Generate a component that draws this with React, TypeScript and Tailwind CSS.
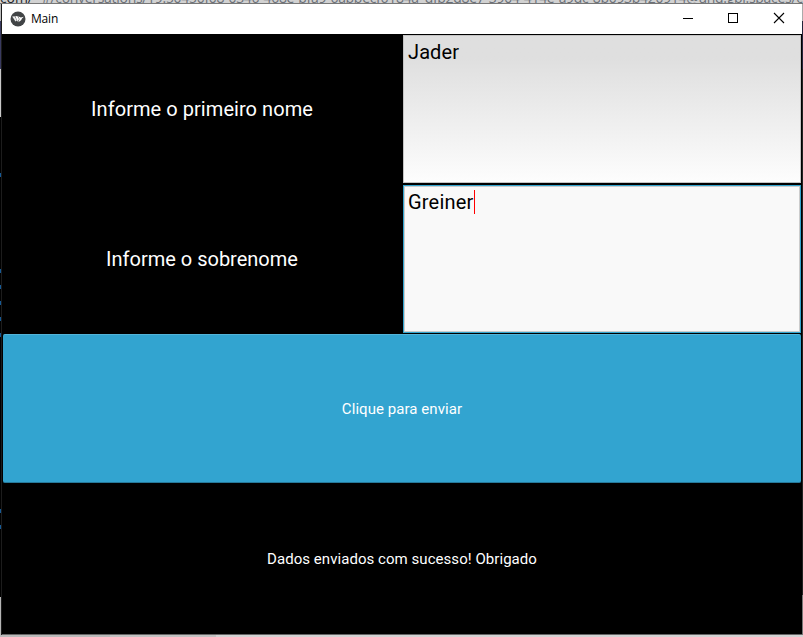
import React from "react";

function KivyLogo() {
  return (
    <svg width="16" height="16" viewBox="0 0 16 16" className="shrink-0">
      <circle cx="8" cy="8" r="7.5" fill="#414446" />
      <path d="M2.2 5.6 L4.6 5.3 L6.9 9.4 L5.5 10.6 Z" fill="#eee" />
      <path d="M5.2 5.2 L7.3 5.1 L9.1 8 L7.7 10.8 Z" fill="#fff" />
      <path d="M8.1 5.2 L10.8 6.4 L13.8 5.8 L12 7.5 L11.1 9.2 L8.3 11.2 L9.5 8 Z" fill="#fff" />
    </svg>
  );
}

function TitleBar() {
  return (
    <header className="flex h-[30px] shrink-0 items-center bg-white pl-2">
      <KivyLogo />
      <span className="ml-[5px] font-['Open_Sans',sans-serif] text-[12px] leading-[30px] tracking-[-0.2px] text-black">Main</span>
      <div className="ml-auto flex items-center">
        <svg width="119" height="30" fill="none" stroke="#000" shapeRendering="crispEdges">
          <path d="M0 14.5H10" />
          <rect x="45.5" y="9.5" width="9" height="9" />
          <path d="M91 9L101 19M101 9L91 19" shapeRendering="auto" strokeWidth="1.1" />
        </svg>
      </div>
    </header>
  );
}

function LeftEdge() {
  return (
    <div className="flex w-0.5 shrink-0 flex-col border-r border-[#1c1c1c] bg-black">
      <div className="h-[17px] bg-[#bdbdbd]" />
      <div className="h-12 bg-[#393a60]" />
      <div className="h-12 bg-[#c9c9c9]" />
      <div className="h-[56px]" />
      {[96, 16, 16, 16, 16, 176, 16, 16].map((gap, i) => (
        <div key={i} className="shrink-0" style={{ height: gap }}>
          <div className="h-1 w-full bg-[#155a96]" />
        </div>
      ))}
      <div className="mt-auto h-[38px] bg-[#b5b5b5]" />
    </div>
  );
}

export default function App() {
  return (
    <div className="flex h-[637px] w-[803px] flex-col overflow-hidden bg-[#c0c0c0] font-[Roboto,sans-serif]">
      <div className="h-1 shrink-0 overflow-hidden border-b border-[#777] bg-[#d2d2d2]">
        <div className="-mt-[12px] w-[900px] whitespace-nowrap font-['Open_Sans',sans-serif] text-[14px] leading-5 tracking-[-0.3px] text-[#6b7078]">
          <span className="mr-[3px] tracking-[-0.1px] text-[#24272b]">com/</span>_#/conversations/19:50450f08-0346-468e-bfa9-6abbecf6184a_dfb2d8e7-3904-414e-a9dc-8b093b420914@unq.gbl.spaces/ctx
        </div>
      </div>
      <div className="flex h-[631px] shrink-0">
        <LeftEdge />
        <main className="flex w-[800px] flex-col border-b border-[#666] bg-black">
          <TitleBar />
          <div className="flex h-[150px] shrink-0">
            <div className="flex w-[400px] items-center justify-center text-[20px] tracking-[0.06px] text-white">Informe o primeiro nome</div>
            <div className="ml-px mt-px h-[148px] w-[398px] border border-[#c4c4c4] bg-linear-to-b from-[#dfdfdf] from-15% to-[#fdfdfd] px-1 pt-px text-[20px] leading-[30px] tracking-[0.1px] text-black">Jader</div>
          </div>
          <div className="flex h-[150px] shrink-0">
            <div className="flex w-[400px] items-center justify-center text-[20px] text-white">Informe o sobrenome</div>
            <div className="ml-px mt-px h-[148px] w-[398px] border border-[#32a4ce] bg-[#f9f9f9]">
              <div className="flex h-full items-start border border-[#ccc] pl-[3px] pt-[3px] text-[20px] leading-6 tracking-[0.2px] text-black">
                Greiner
                <span className="h-6 w-px bg-[#ff0000]" />
              </div>
            </div>
          </div>
          <button className="ml-px flex h-[149px] w-[798px] shrink-0 items-center justify-center rounded-[2px] border-y border-t-[#53b4d9] border-b-[#27799a] bg-[#32a4d0] pt-0.5 text-[15px] tracking-[0.06px] text-white">
            Clique para enviar
          </button>
          <div className="flex h-[151px] shrink-0 items-center justify-center pt-0.5 text-[15px] tracking-[0.05px] text-white">Dados enviados com sucesso! Obrigado</div>
        </main>
        <div className="flex w-px flex-col bg-[#222]">
          <div className="h-[17px] bg-[#aaa]" />
          <div className="h-12 bg-[#24243a]" />
          <div className="mt-auto h-10 bg-[#777]" />
        </div>
      </div>
      <div className="flex h-0.5 shrink-0">
        <div className="w-[110px] bg-[#b9b9b9]" />
        <div className="w-[106px] bg-[#c2c2c2]" />
        <div className="flex-1 bg-[#d3d3d3]" />
      </div>
    </div>
  );
}
